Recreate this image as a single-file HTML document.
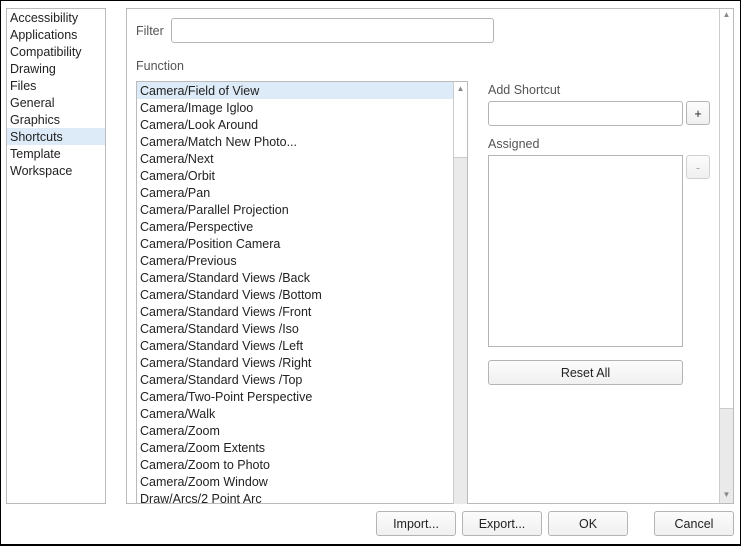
<!DOCTYPE html><html><head><style>
body{margin:0;width:741px;height:546px;overflow:hidden;background:#fff;font-family:"Liberation Sans",sans-serif;font-size:12.5px;color:#222;position:relative}
.a{position:absolute;box-sizing:border-box}
.win{left:0;top:0;width:741px;height:546px;border:1px solid #000;border-bottom-width:2px}
.side{left:6px;top:8px;width:100px;height:496px;border:1px solid #bbb}
.side div{height:17px;line-height:18px;padding-left:3px}
.sel{background:#dcebf7}
.panel{left:126px;top:8px;width:608px;height:496px;border:1px solid #bbb}
.inp{border:1px solid #b4b4b4;border-radius:3px;background:#fff}
.btn{border:1px solid #b4b4b4;border-radius:3px;background:linear-gradient(#fcfcfc,#f0f0f0);text-align:center;line-height:24px}
.list{left:136px;top:81px;width:332px;height:423px;border:1px solid #bbb;overflow:hidden}
.list div{height:17px;line-height:18px;padding-left:3px}
.sb{background:#eaeaea;border-left:1px solid #ccc}
.arr{font-size:8px;color:#888;text-align:center}
</style></head><body>
<div class="a win"></div>
<div class="a side">
<div>Accessibility</div><div>Applications</div><div>Compatibility</div><div>Drawing</div><div>Files</div><div>General</div><div>Graphics</div><div class="sel">Shortcuts</div><div>Template</div><div>Workspace</div></div>
<div class="a panel"></div>
<div class="a sb" style="left:719px;top:9px;width:14px;height:494px"></div>
<div class="a" style="left:720px;top:9px;width:13px;height:400px;background:#fff;border-bottom:1px solid #ccc"></div>
<div class="a arr" style="left:720px;top:10px;width:13px">▲</div>
<div class="a arr" style="left:720px;top:490px;width:13px">▼</div>
<div class="a" style="left:136px;top:24px;color:#555">Filter</div>
<div class="a inp" style="left:171px;top:18px;width:323px;height:25px"></div>
<div class="a" style="left:136px;top:59px;color:#555">Function</div>
<div class="a list">
<div class="sel">Camera/Field of View</div><div>Camera/Image Igloo</div><div>Camera/Look Around</div><div>Camera/Match New Photo...</div><div>Camera/Next</div><div>Camera/Orbit</div><div>Camera/Pan</div><div>Camera/Parallel Projection</div><div>Camera/Perspective</div><div>Camera/Position Camera</div><div>Camera/Previous</div><div>Camera/Standard Views /Back</div><div>Camera/Standard Views /Bottom</div><div>Camera/Standard Views /Front</div><div>Camera/Standard Views /Iso</div><div>Camera/Standard Views /Left</div><div>Camera/Standard Views /Right</div><div>Camera/Standard Views /Top</div><div>Camera/Two-Point Perspective</div><div>Camera/Walk</div><div>Camera/Zoom</div><div>Camera/Zoom Extents</div><div>Camera/Zoom to Photo</div><div>Camera/Zoom Window</div><div>Draw/Arcs/2 Point Arc</div>
</div>
<div class="a sb" style="left:453px;top:82px;width:14px;height:422px"></div>
<div class="a" style="left:454px;top:82px;width:13px;height:76px;background:#fff;border-bottom:1px solid #ccc"></div>
<div class="a arr" style="left:454px;top:84px;width:13px">▲</div>
<div class="a" style="left:488px;top:83px;color:#555">Add Shortcut</div>
<div class="a inp" style="left:488px;top:101px;width:195px;height:25px"></div>
<div class="a btn" style="left:686px;top:101px;width:24px;height:24px">+</div>
<div class="a" style="left:488px;top:137px;color:#555">Assigned</div>
<div class="a" style="left:488px;top:155px;width:195px;height:192px;border:1px solid #b4b4b4"></div>
<div class="a btn" style="left:686px;top:155px;width:24px;height:24px;color:#aaa;border-color:#d0d0d0">-</div>
<div class="a btn" style="left:488px;top:360px;width:195px;height:25px">Reset All</div>
<div class="a btn" style="left:376px;top:511px;width:80px;height:25px">Import...</div>
<div class="a btn" style="left:462px;top:511px;width:80px;height:25px">Export...</div>
<div class="a btn" style="left:548px;top:511px;width:80px;height:25px">OK</div>
<div class="a btn" style="left:654px;top:511px;width:80px;height:25px">Cancel</div>
</body></html>
